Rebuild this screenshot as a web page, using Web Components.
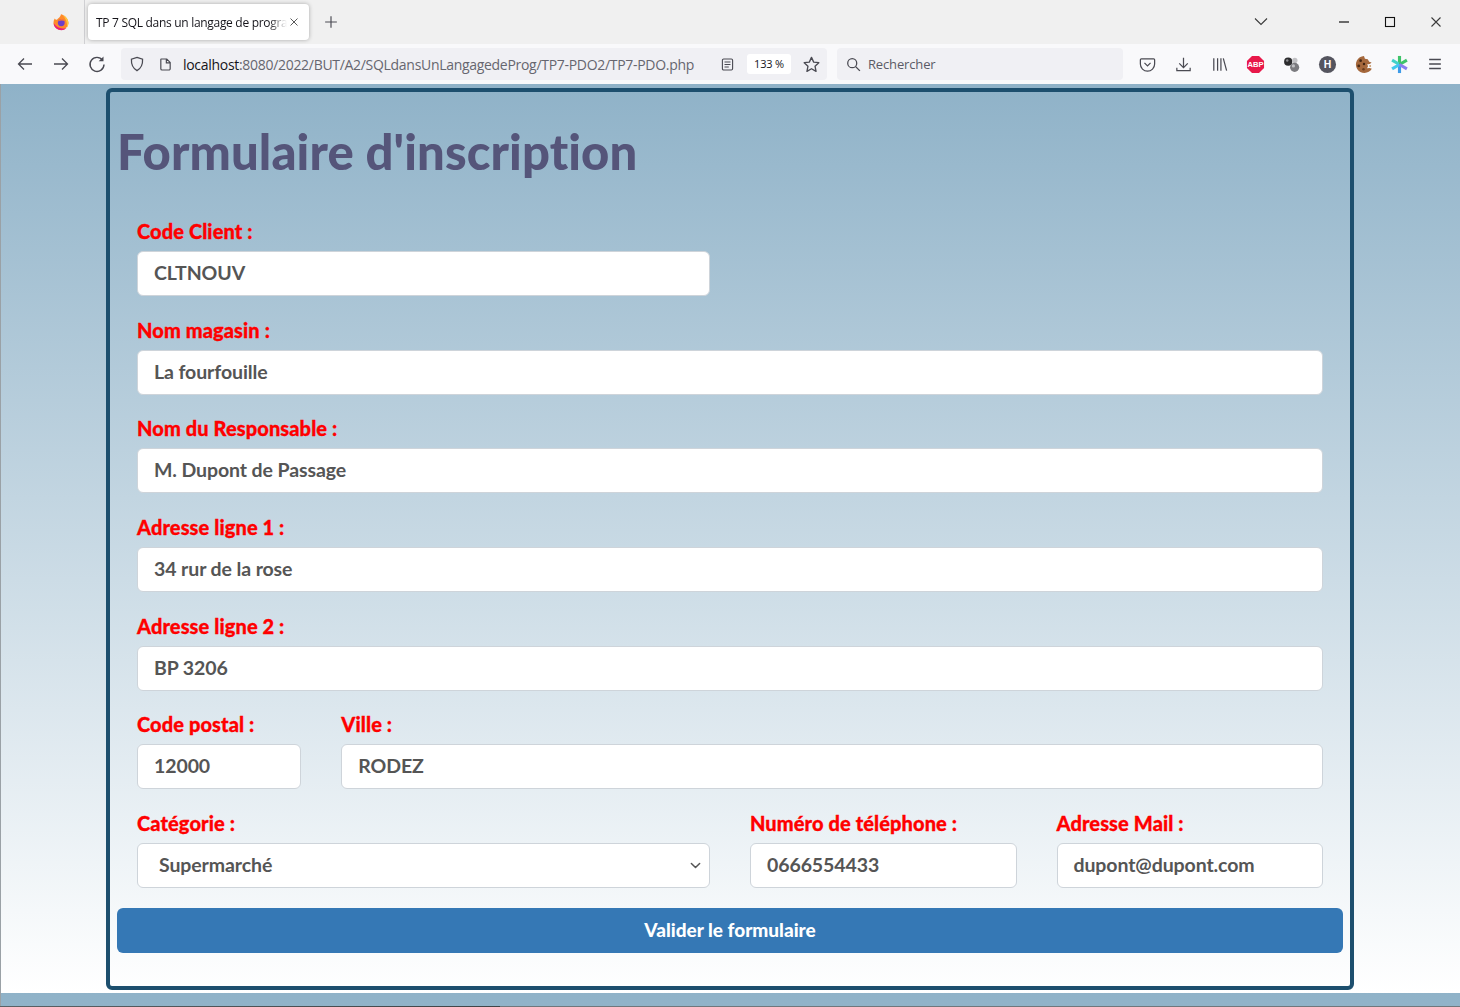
<!DOCTYPE html>
<html lang="fr">
<head>
<meta charset="utf-8">
<title>TP 7 SQL dans un langage de programmation</title>
<style>
  html, body { margin: 0; padding: 0; height: 100%; overflow: hidden; }
  body { font-family: "Open Sans", "Noto Sans", sans-serif; background: #fff; }
</style>
</head>
<body>
<browser-window url-host="localhost" url-path=":8080/2022/BUT/A2/SQLdansUnLangagedeProg/TP7-PDO2/TP7-PDO.php" tab-title="TP 7 SQL dans un langage de progra">
  <inscription-card heading="Formulaire d'inscription">
    <form-row><form-field span="6" label="Code Client :" value="CLTNOUV"></form-field></form-row>
    <form-row><form-field span="12" label="Nom magasin :" value="La fourfouille"></form-field></form-row>
    <form-row><form-field span="12" label="Nom du Responsable :" value="M. Dupont de Passage"></form-field></form-row>
    <form-row><form-field span="12" label="Adresse ligne 1 :" value="34 rur de la rose"></form-field></form-row>
    <form-row><form-field span="12" label="Adresse ligne 2 :" value="BP 3206"></form-field></form-row>
    <form-row>
      <form-field span="2" label="Code postal :" value="12000"></form-field>
      <form-field span="10" label="Ville :" value="RODEZ"></form-field>
    </form-row>
    <form-row>
      <form-field span="6" label="Catégorie :" value="Supermarché" select></form-field>
      <form-field span="3" label="Numéro de téléphone :" value="0666554433"></form-field>
      <form-field span="3" label="Adresse Mail :" value="dupont@dupont.com"></form-field>
    </form-row>
    <submit-button>Valider le formulaire</submit-button>
  </inscription-card>
</browser-window>

<script>
// icones de la barre d'outils
const ICONS = {
  back: '<path d="M17 10H4M9 4.500 3.500 10 9 15.500" fill="none" stroke="#4a4a52" stroke-width="1.300"/>',
  forward: '<path d="M3 10h13M11 4.500l5.500 5.500-5.500 5.500" fill="none" stroke="#4a4a52" stroke-width="1.300"/>',
  reload: '<path d="M15.600 6.200A7 7 0 1 0 17 10.500" fill="none" stroke="#4a4a52" stroke-width="1.400"/><path d="M16.500 2.500v4.800h-4.800z" fill="#4a4a52"/>',
  shield: '<path d="M10 2.600 16.200 4.600c.3 5.600-1.600 10.200-6.200 12.800C5.400 14.800 3.500 10.200 3.800 4.600z" fill="none" stroke="#4a4a52" stroke-width="1.400"/>',
  page: '<path d="M5 3.500h6.500L15.500 7.500V15a1.500 1.500 0 0 1-1.500 1.500H6A1.500 1.500 0 0 1 4.500 15V4A.5.5 0 0 1 5 3.500zM11 3.500V8h4.500" fill="none" stroke="#4a4a52" stroke-width="1.400"/>',
  reader: '<rect x="4" y="3.500" width="12" height="13" rx="1.500" fill="none" stroke="#4a4a52" stroke-width="1.300"/><path d="M6.500 7h7M6.500 10h7M6.500 13h5" stroke="#4a4a52" stroke-width="1.200"/>',
  star: '<path d="m10 2.500 2.300 5 5.400.6-4 3.700 1.100 5.400L10 14.500l-4.800 2.700 1.100-5.400-4-3.700 5.400-.6z" fill="none" stroke="#4a4a52" stroke-width="1.400" stroke-linejoin="round"/>',
  search: '<circle cx="8.500" cy="8.500" r="5.300" fill="none" stroke="#4a4a52" stroke-width="1.500"/><path d="m12.500 12.500 5 5" stroke="#4a4a52" stroke-width="1.600"/>',
  pocket: '<path d="M3.500 4h13A1 1 0 0 1 17.500 5v4.500a7.500 7.500 0 0 1-15 0V5a1 1 0 0 1 1-1z" fill="none" stroke="#4a4a52" stroke-width="1.300"/><path d="m6.800 8.300 3.200 3.100 3.200-3.100" fill="none" stroke="#4a4a52" stroke-width="1.300"/>',
  download: '<path d="M10 3v10M5.500 8.800 10 13.300l4.500-4.500M3 13.500v3h14v-3" fill="none" stroke="#4a4a52" stroke-width="1.300"/>',
  library: '<path d="M4 3.500v13M8 3.500v13M11.500 3.500v13M14 3.500l3.500 13" fill="none" stroke="#4a4a52" stroke-width="1.300"/>',
  abp: '<path d="M6.300 1h7.400L19 6.300v7.400L13.700 19H6.300L1 13.700V6.300z" fill="#e8184a"/><text x="10" y="13" text-anchor="middle" font-family="Liberation Sans" font-weight="700" font-size="8" fill="#fff">ABP</text>',
  balls: '<circle cx="6.500" cy="7" r="4.300" fill="#2c2c2e"/><circle cx="5.500" cy="5.700" r="1.300" fill="#8a8a8e"/><circle cx="13.500" cy="5.800" r="2.800" fill="#c2c2c5"/><circle cx="13.300" cy="13" r="4.800" fill="#7b7b7f"/><circle cx="12" cy="11.500" r="1.700" fill="#c0c0c3"/>',
  helper: '<circle cx="10" cy="10" r="9" fill="#55555f"/><text x="10" y="14" text-anchor="middle" font-family="Liberation Sans" font-weight="700" font-size="11" fill="#fff">H</text>',
  cookie: '<path d="M10.500 1A9 9 0 1 0 18.800 14.500l-2.300-.8-2.800.3 1.200-2.300-1.200-1.700 3-.5 1.800-1.500L16 7 14.500 4.500 11.500 4z" fill="#a5683c"/><circle cx="7" cy="6" r="1.400" fill="#3f2413"/><circle cx="5" cy="11.500" r="1.500" fill="#4a2a16"/><circle cx="10.500" cy="9.500" r="1.300" fill="#3f2413"/><circle cx="10" cy="15" r="1.300" fill="#6b3d1e"/><circle cx="17" cy="11.500" r="1" fill="#c99a6b"/>',
  spark: '<g stroke-width="3.300" stroke-linecap="butt"><path d="M10 1v9" stroke="#3fc46a"/><path d="M10 10v9" stroke="#3d9be8"/><path d="m2.200 5.500 7.800 4.500" stroke="#43d1c8"/><path d="M10 10l7.800-4.500" stroke="#3fc46a"/><path d="m2.200 14.500 7.800-4.500" stroke="#43c8ee"/><path d="m10 10 7.800 4.500" stroke="#8a7df0"/></g>',
  menu: '<path d="M3.500 5h13M3.500 10h13M3.500 15h13" stroke="#4a4a52" stroke-width="1.400"/>',
  plus: '<path d="M10 3.500v13M3.500 10h13" stroke="#4a4a52" stroke-width="1.300"/>',
  close: '<path d="m5 5 10 10M15 5 5 15" stroke="#3a3a3a" stroke-width="1.200"/>',
  firefox: '<path d="M10 1.500c3 .8 7.800 3.500 8.300 9.500A8.300 8.300 0 1 1 3 6.200c.7 1 1.500 1.500 2.500 1.300C7 6 9.500 4.500 10 1.500z" fill="#ff8a2a"/><path d="M12 2.500c3 1.200 6 4 6.300 8.500 0 2-.6 3.600-1.600 5 .5-5-1.200-10-4.700-13.500z" fill="#ffc83d"/><path d="M1.800 11.500a8.300 8.300 0 0 0 14.500 4.800c-4.500 2-10.500 1-14.500-4.800z" fill="#ea1f77"/><circle cx="10.300" cy="10.800" r="3.800" fill="#6d3fc9"/><path d="M6.500 9.500c.8-2 2.800-3 4.800-2.700 1.500.2 2.600 1 3.200 2.200-2.500-1-5.500-1.200-8 .5z" fill="#ff7a2e"/>'
};
const icon = (name, size = 20) => `<svg width="${size}" height="${size}" viewBox="0 0 20 20" aria-hidden="true">${ICONS[name]}</svg>`;

class BrowserWindow extends HTMLElement {
  connectedCallback() {
    const root = this.attachShadow({ mode: "open" });
    const tools = ["pocket", "download", "library", "abp", "balls", "helper", "cookie", "spark", "menu"];
    root.innerHTML = `
      <style>
        :host { display: flex; flex-direction: column; height: 100vh; color: #15141a; font-family: "Open Sans", "Noto Sans", sans-serif; }
        .tabs { display: flex; align-items: center; height: 44px; flex: none; background: #f0f0f0; }
        .logo { display: flex; margin-left: 52px; }
        .sep { width: 1px; height: 44px; background: #d0d0d3; margin: 0 3px 0 14px; }
        .tab { display: flex; align-items: center; width: 221px; height: 36px; box-sizing: border-box; padding: 0 9px 0 8px; background: #fff; border-radius: 4px; box-shadow: 0 0 4px rgba(0,0,0,.3); font-size: 12px; letter-spacing: -.3px; }
        .tab span { flex: 1; white-space: nowrap; -webkit-mask-image: linear-gradient(to left, transparent 0, #000 18px); mask-image: linear-gradient(to left, transparent 0, #000 18px); }
        .tab svg { flex: none; }
        .plus { display: flex; margin-left: 13px; }
        .fill { flex: 1; }
        .list { display: flex; margin-right: 50px; }
        .win { display: flex; width: 46px; height: 44px; align-items: center; justify-content: center; }
        .tabs > :last-child { margin-right: 1px; }
        .bar { display: flex; align-items: center; height: 40px; flex: none; padding: 0 7px; background: #f9f9fb; box-sizing: border-box; }
        .btn { display: flex; width: 36px; height: 40px; flex: none; align-items: center; justify-content: center; }
        .url { display: flex; align-items: center; width: 706px; height: 32px; margin-left: 6px; background: #f0f0f4; border-radius: 4px; font-size: 14px; letter-spacing: -.3px; }
        .url .shield { display: flex; width: 32px; justify-content: center; }
        .url .page { display: flex; width: 24px; justify-content: center; }
        .url .text { flex: 1; margin-left: 6px; white-space: nowrap; color: #66666f; }
        .url .text b { font-weight: 400; color: #15141a; }
        .url .reader { display: flex; width: 24px; justify-content: center; margin-right: 8px; }
        .zoom { width: 44px; height: 20px; line-height: 20px; text-align: center; background: #fff; border-radius: 3px; font-size: 11px; letter-spacing: -.2px; }
        .url .star { display: flex; width: 32px; justify-content: center; margin-left: 4px; }
        .search { display: flex; align-items: center; gap: 6px; width: 286px; height: 32px; box-sizing: border-box; padding-left: 8px; margin: 0 6px 0 10px; background: #f0f0f4; border-radius: 4px; font-size: 13px; color: #5b5b66; letter-spacing: -.15px; }
        .view { flex: 1; min-height: 0; overflow: hidden; box-shadow: inset 1px 0 #9aa1a6;
                background: linear-gradient(#8fb2c8, #ffffff) 0 0 / 100% 909px repeat-y; }
        .strip { height: 1px; flex: none; background: linear-gradient(90deg, #5a6165, #3f4447 500px, #6f777c 500px); }
      </style>
      <div class="tabs">
        <span class="logo">${icon("firefox", 18)}</span>
        <span class="sep"></span>
        <div class="tab"><span>${this.getAttribute("tab-title")}</span>${icon("close", 14)}</div>
        <span class="plus">${icon("plus", 18)}</span>
        <span class="fill"></span>
        <span class="list"><svg width="20" height="20" viewBox="0 0 20 20"><path d="m4 6.500 6 6 6-6" fill="none" stroke="#3a3a3a" stroke-width="1.100"/></svg></span>
        <span class="win"><svg width="12" height="12" viewBox="0 0 12 12"><path d="M1 6h10" stroke="#111" stroke-width="1.200"/></svg></span>
        <span class="win"><svg width="12" height="12" viewBox="0 0 12 12"><rect x="1.500" y="1.500" width="9" height="9" fill="none" stroke="#111" stroke-width="1.100"/></svg></span>
        <span class="win">${icon("close", 18)}</span>
      </div>
      <div class="bar">
        <span class="btn">${icon("back")}</span>
        <span class="btn">${icon("forward")}</span>
        <span class="btn">${icon("reload")}</span>
        <div class="url">
          <span class="shield">${icon("shield", 18)}</span>
          <span class="page">${icon("page", 17)}</span>
          <span class="text"><b>${this.getAttribute("url-host")}</b>${this.getAttribute("url-path")}</span>
          <span class="reader">${icon("reader", 17)}</span>
          <span class="zoom">133 %</span>
          <span class="star">${icon("star", 19)}</span>
        </div>
        <div class="search">${icon("search", 17)}<span>Rechercher</span></div>
        ${tools.map((t) => `<span class="btn">${icon(t, t === "menu" ? 18 : 19)}</span>`).join("")}
      </div>
      <div class="view"><slot></slot></div>
      <div class="strip"></div>`;
  }
}

class InscriptionCard extends HTMLElement {
  connectedCallback() {
    const root = this.attachShadow({ mode: "open" });
    root.innerHTML = `
      <style>
        :host { display: block; box-sizing: border-box; width: 1248px; margin: 4px auto 0; padding: 0 7px 33px; border: 4px solid #1d4f6e; border-radius: 6px; }
        h1 { margin: 31px 0 37px; height: 56px; line-height: 56px; font-family: Lato, sans-serif; font-weight: 900; font-size: 49px; color: #55557a; letter-spacing: .1px; }
      </style>
      <h1>${this.getAttribute("heading")}</h1>
      <slot></slot>`;
  }
}

class FormRow extends HTMLElement {
  connectedCallback() {
    this.attachShadow({ mode: "open" }).innerHTML = `
      <style>:host { display: flex; height: 98.67px; }</style>
      <slot></slot>`;
  }
}

class FormField extends HTMLElement {
  connectedCallback() {
    const span = Number(this.getAttribute("span"));
    const isSelect = this.hasAttribute("select");
    this.attachShadow({ mode: "open" }).innerHTML = `
      <style>
        :host { display: block; box-sizing: border-box; width: ${(span / 12) * 100}%; padding: 0 20px; }
        label { display: block; height: 30px; line-height: 30px; margin-bottom: 5px; font-family: Lato, sans-serif; font-weight: 900; font-size: 20px; letter-spacing: .1px; -webkit-text-stroke: .3px #ff0000; color: #ff0000; white-space: nowrap; }
        .control { display: flex; align-items: center; justify-content: space-between; box-sizing: border-box; height: 45px; padding: 0 ${isSelect ? "8px 0 21px" : "16px"}; background: #fff; border: 1px solid #ced4da; border-radius: 6px; font-family: Lato, sans-serif; font-weight: 700; font-size: 19.5px; letter-spacing: -.1px; color: #555; white-space: nowrap; }
        .control span { position: relative; top: -1px; }
        svg { display: block; }
      </style>
      <label>${this.getAttribute("label")}</label>
      <div class="control"><span>${this.getAttribute("value")}</span>${isSelect ? '<svg width="11" height="11" viewBox="0 0 16 16"><path d="m2 5 6 6 6-6" fill="none" stroke="#555" stroke-width="2.200" stroke-linecap="round" stroke-linejoin="round"/></svg>' : ""}</div>`;
  }
}

class SubmitButton extends HTMLElement {
  connectedCallback() {
    this.attachShadow({ mode: "open" }).innerHTML = `
      <style>
        :host { display: block; box-sizing: border-box; height: 45px; margin-top: 1.33px; line-height: 44px; text-align: center; background: #3578b5; border-radius: 6px; font-family: Lato, sans-serif; font-weight: 900; font-size: 19px; color: #fff; }
      </style>
      <slot></slot>`;
  }
}

customElements.define("browser-window", BrowserWindow);
customElements.define("inscription-card", InscriptionCard);
customElements.define("form-row", FormRow);
customElements.define("form-field", FormField);
customElements.define("submit-button", SubmitButton);
</script>
</body>
</html>
